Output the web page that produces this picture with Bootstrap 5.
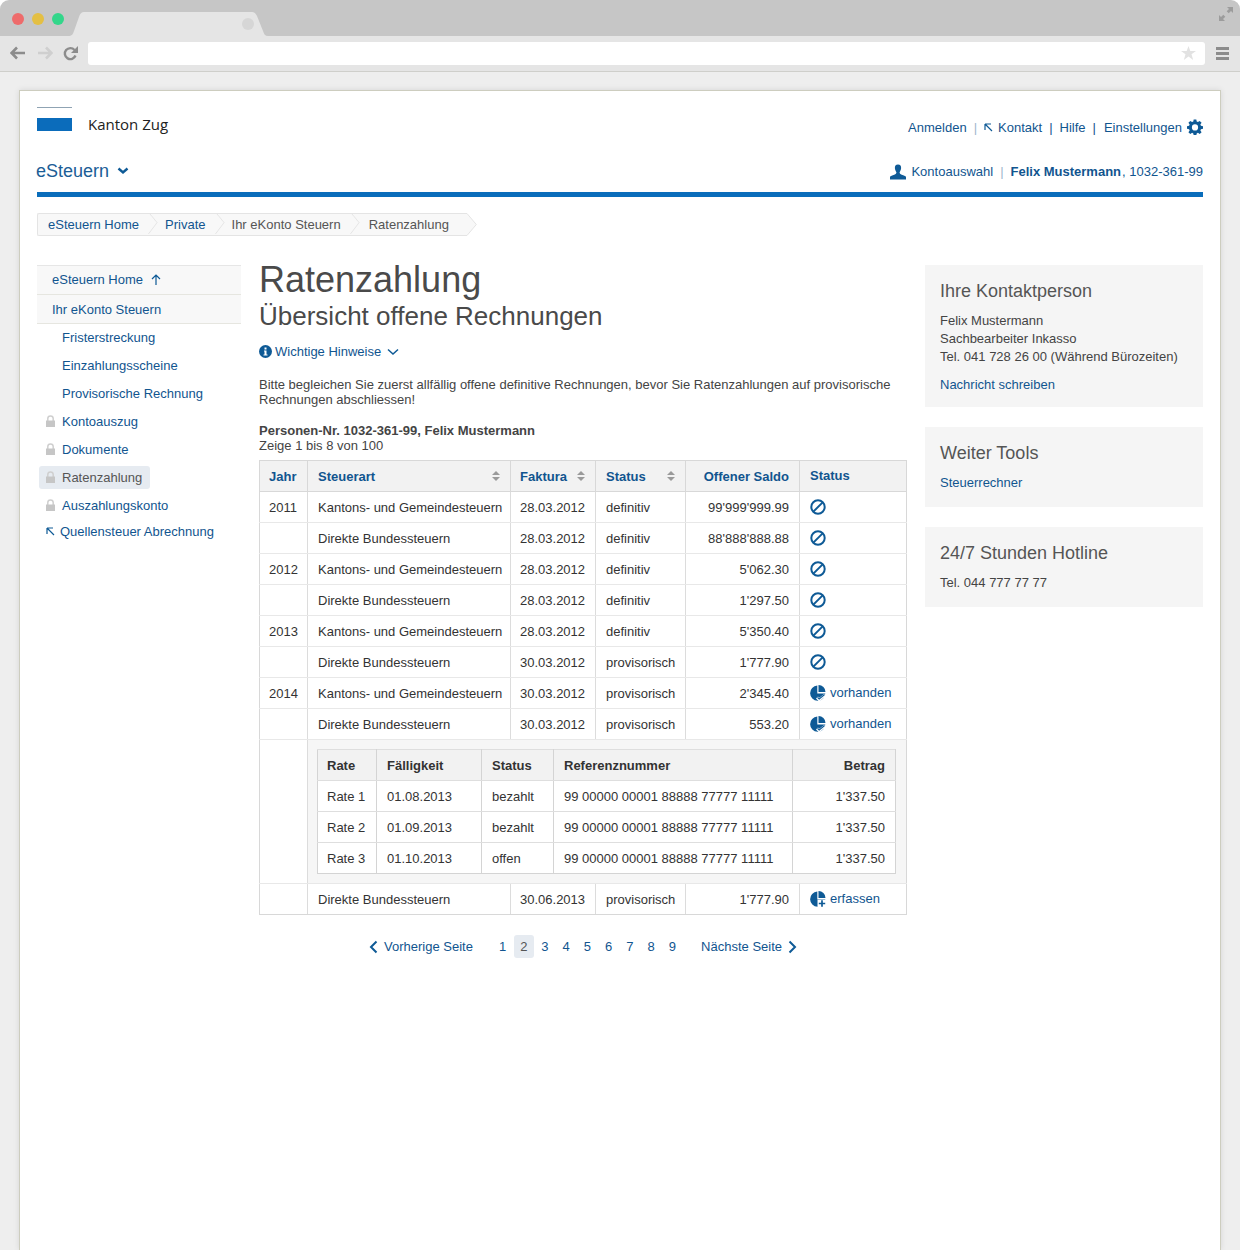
<!DOCTYPE html>
<html lang="de">
<head>
<meta charset="utf-8">
<title>Ratenzahlung</title>
<link href="https://cdn.jsdelivr.net/npm/bootstrap@5.3.0/dist/css/bootstrap.min.css" rel="stylesheet">
<style>
html,body{height:1250px;overflow:hidden;background:#fff}
body{font-family:"Liberation Sans",Arial,sans-serif;font-size:13px;line-height:15px;color:#444;display:flex;flex-direction:column}
a{color:#11558f;text-decoration:none}
svg{display:block;flex:none}
.win-top{height:36px;background:#c6c6c6;border-radius:9px 9px 0 0;display:flex;align-items:flex-start;flex:none}
.win-dots{margin-top:12px;margin-left:12px}
.win-tab{margin-left:4px;margin-top:12px}
.win-exp{margin-top:7px;margin-right:7px}
.win-bar{height:36px;background:#e5e5e5;border-bottom:1px solid #cfcfcb;display:flex;align-items:center;flex:none;padding:0 11px 1px 10px}
.tb-fwd{margin-left:13px}
.tb-rel{margin-left:10px}
.url-box{height:23px;background:#fff;border-radius:3px;flex:1;margin:0 11px 0 10px;display:flex;align-items:center;justify-content:flex-end;padding-right:9px}
.desk{flex:1;background:#eee;padding:18px 19px 0;min-height:0}
.sheet{background:#fff;border:1px solid #cdcdbf;border-bottom:0;height:100%;padding:0 17px;box-shadow:0 0 6px rgba(0,0,0,.1)}
.head-one{height:65px;align-items:flex-start}
.logo-wrap{margin-top:16px;width:35px}
.logo-line{height:1px;background:#8fa3b3}
.logo-flag{height:13px;background:#0b6cbb;margin-top:10px}
.logo-name{font-family:"Open Sans",sans-serif;font-size:15px;line-height:20px;color:#222;margin-left:16px;margin-top:23px}
.top-links{margin-top:28px;color:#11558f}
.sep-l{color:#9fb6cc;margin:0 7px}
.sep-d{color:#11558f;margin:0 7px}
.sep-d.wide{margin-right:8px}
.gap-five{margin-right:5px}
.gear-ico{margin-left:5px}
.head-two{height:36px;align-items:center;padding-bottom:5px}
.prod-name{font-size:18px;line-height:22px;color:#1b5d96;margin-left:-1px;margin-top:-2px}
.prod-chev{margin-left:8px;margin-top:-2px}
.usr-ico{margin-right:5px}
.acct-name{margin-right:1px}
.blue-rule{height:5px;background:#0a6dbb}
.crumbs{margin-top:16px;height:23px;align-items:stretch;width:fit-content}
.crumb-in{background:#f8f8f8;border:1px solid #e4e4e4;border-right:0;border-radius:2px 0 0 2px;display:flex;align-items:center;height:23px}
.crumb-tx{padding-left:7px;padding-right:7px;line-height:21px}
span.crumb-tx{color:#555}
.crumb-tx.first{padding-left:10px}
.crumb-tx.last{padding-left:9px;padding-right:18px}
.crumb-sv{margin-left:2px}
.three-col{margin-top:29px;gap:18px}
.side-col{width:204px;flex:none}
.main-col{width:648px;flex:none}
.aside-col{width:278px;flex:none}
.s-top{background:#f8f8f8;border-bottom:1px solid #e6e6e0;height:29px;padding-left:15px;display:flex;align-items:center}
.s-top.one{border-top:1px solid #e6e6e6;height:30px;gap:8px;padding-bottom:2px}
.s-row{height:28px;display:flex;align-items:center;padding-left:25px;padding-bottom:2px}
.s-row.locked{padding-left:9px}
.s-row.pill-row{padding-left:0}
.s-lock{margin-right:7px}
.s-pill{background:#e6ebf1;border-radius:3px;height:23px;width:111px;display:flex;align-items:center;padding-left:7px;margin-left:2px;color:#555}
.s-ext{height:24px;display:flex;align-items:center;padding-left:9px;gap:5px;padding-bottom:2px}
.pg-title{font-size:36px;line-height:30px;font-weight:400;color:#4a4a4a;margin:0}
.pg-sub{font-size:26px;line-height:30px;font-weight:400;color:#4a4a4a;margin:6px 0 0}
.hint-row{margin-top:13px;gap:3px;align-items:center;height:15px}
.hint-chev{margin-left:3px}
.intro{margin:18px 0 0;color:#444}
.who{margin:16px 0 0;color:#444}
.who b{color:#444}
.tax-tbl.table{table-layout:fixed;width:647px;margin:7px 0 0;border-collapse:collapse;color:#333;--bs-table-color:#333;--bs-table-bg:transparent}
.tax-tbl.table>:not(caption)>*>*{padding:0 10px;height:31px;border:1px solid #dcdcdc;border-top-color:#e8e8e8;border-bottom-color:#e8e8e8;vertical-align:middle;line-height:15px;box-shadow:none;background:transparent;color:#333;white-space:nowrap}
.tax-tbl.table>thead>tr>th{background:#f2f2f2;border-color:#d8d8d8;font-weight:700;color:#11558f}
.tax-tbl.table>tbody>tr:last-child>td{border-bottom-color:#d8d8d8}
.tax-tbl.table>tbody>tr>td:first-child{border-left-color:#d8d8d8}
.tax-tbl.table>tbody>tr>td:last-child{border-right-color:#d8d8d8}
.tax-tbl.table>:not(caption)>*>*.tr-r{text-align:right}
.tax-tbl.table>tbody>tr>td.sub-host{background:#f6f6f6;padding:9px 10px 9px 9px}
.tax-tbl.table>thead>tr>th.st-h{padding-bottom:2px}
.tax-tbl.table>:not(caption)>*>*:nth-child(3),.tax-tbl.table>:not(caption)>*>*:first-child{padding-left:9px}
.tax-tbl.table>tbody>tr>td.sub-host:nth-child(2){padding-left:9px}
.th-flex{display:flex;justify-content:space-between;align-items:center}
.st-cell{display:flex;align-items:center;gap:4px}
.st-cell.lift{margin-top:-1px}
.rate-tbl.table{table-layout:fixed;width:578px;margin:0;border-collapse:collapse;background:#fff;color:#333}
.rate-tbl.table>:not(caption)>*>*{padding:0 10px;height:31px;border:1px solid #d4d4d4;border-top-color:#dedede;border-bottom-color:#dedede;vertical-align:middle;line-height:15px;box-shadow:none;background:#fff;color:#333;white-space:nowrap}
.rate-tbl.table>thead>tr>th{background:#f2f2f2;font-weight:700;color:#333}
.rate-tbl.table>tbody>tr:last-child>td{border-bottom-color:#d4d4d4}
.rate-tbl.table>:not(caption)>*>*.tr-r{text-align:right}
.rate-tbl.table>:not(caption)>*>*:first-child{padding-left:9px}
.pager{margin-top:20px;height:23px;align-items:center;padding-left:110px}
.pg-prev{display:flex;align-items:center;gap:6px;margin-right:19px}
.pg-num{width:21.25px;text-align:center;line-height:23px;display:block}
.pg-num.on{background:#e6ebf1;border-radius:3px;color:#555;width:20px;margin:0 .6px}
.pg-next{display:flex;align-items:center;gap:6px;margin-left:18px}
.info-box{background:#f5f5f5;padding:16px 15px 0;margin-bottom:20px;color:#444}
.info-box h3{font-size:18px;line-height:20px;font-weight:400;color:#555;margin:0}
.bx-a{height:142px}.bx-b{height:80px}.bx-c{height:80px}
.bx-lines{margin:11px 0 0;line-height:18px}
.bx-link{display:block;margin-top:11px;line-height:15px}
.bx-b .bx-link{margin-top:12px}
.bx-c .bx-t{margin-top:12px;line-height:15px}
</style>
</head>
<body>
<svg width="0" height="0" class="position-absolute">
  <defs>
    <symbol id="i-ban" viewBox="0 0 16 16"><circle cx="8" cy="8" r="6.7" fill="none" stroke="#0e5a96" stroke-width="2"/><path d="M3.6 12.4 12.4 3.6" stroke="#0e5a96" stroke-width="2"/></symbol>
    <symbol id="i-pie" viewBox="0 0 16 16"><path d="M7.300 .6a7.600 7.600 0 1 0 8 8H7.300z" fill="#0e5a96"/><path d="M8.500 0a7 7 0 0 1 7 7H8.500z" fill="#0e5a96"/><path d="M7 12.500 9.200 14.700 15 10" fill="none" stroke="#fff" stroke-width="2.800"/><path d="M7.500 12.300 9.200 14 14.400 9.800" fill="none" stroke="#0e5a96" stroke-width="1.100"/></symbol>
    <symbol id="i-add" viewBox="0 0 16 16"><path d="M7.300 .6a7.600 7.600 0 1 0 8 8H7.300z" fill="#0e5a96"/><path d="M8.500 0a7 7 0 0 1 7 7H8.500z" fill="#0e5a96"/><path d="M7.500 8.800H16V16H7.500z" fill="#fff"/><path d="M12 9.300v6.400M8.800 12.500h6.400" stroke="#0e5a96" stroke-width="1.700"/></symbol>
    <symbol id="i-sort" viewBox="0 0 8 10"><path d="M4 0 8 4H0zM4 10 0 6h8z" fill="#9a9a9a"/></symbol>
    <symbol id="i-lock" viewBox="0 0 9 12"><path d="M1.800 6V3.600a2.700 2.700 0 0 1 5.400 0V6" fill="none" stroke="#cfcfcf" stroke-width="1.500"/><path d="M0 5.500h9V12H0z" fill="#c6c6c6"/></symbol>
    <symbol id="i-nw" viewBox="0 0 9 9"><path d="M1 1V7M1 1H7M1 1 8 8" fill="none" stroke="#0e5a96" stroke-width="1.200"/></symbol>
    <symbol id="i-cr" viewBox="0 0 10 23"><path d="M0 -1 9.500 10.500 0 23" fill="none" stroke="#e4e4e4"/></symbol>
    <symbol id="i-left" viewBox="0 0 9 14"><path d="M7.500 1.500 2 7l5.500 5.500" fill="none" stroke="#0e5a96" stroke-width="2"/></symbol>
    <symbol id="i-right" viewBox="0 0 9 14"><path d="M1.500 1.500 7 7l-5.500 5.500" fill="none" stroke="#0e5a96" stroke-width="2"/></symbol>
  </defs>
</svg>

<div class="win-top">
  <svg class="win-dots" width="52" height="14" viewBox="0 0 52 14"><circle cx="6" cy="7" r="6" fill="#ee6b6b"/><circle cx="26" cy="7" r="6" fill="#e4bf43"/><circle cx="46" cy="7" r="6" fill="#33d68a"/></svg>
  <svg class="win-tab" width="200" height="24" viewBox="0 0 200 24"><path d="M0 24C4 24 5 22 6 19L11 5C12 2 13 0 17 0H184C187 0 188 2 189 4L195 19C196 22 197 24 200 24z" fill="#e5e5e5"/><circle cx="180" cy="12" r="6" fill="#d6d6d6"/></svg>
  <div class="flex-grow-1"></div>
  <svg class="win-exp" width="14" height="14" viewBox="0 0 14 14"><path d="M8 0h6v6l-2-2-2.300 2.300-2-2L10 2zM0 8l2 2 2.300-2.300 2 2L4 12l2 2H0z" fill="#9c9c9c"/></svg>
</div>
<div class="win-bar">
  <svg width="15" height="14" viewBox="0 0 15 14"><path d="M7 1.500 1.500 7 7 12.500M2 7h13" fill="none" stroke="#8c8c8c" stroke-width="2.600"/></svg>
  <svg class="tb-fwd" width="15" height="14" viewBox="0 0 15 14"><path d="M8 1.500 13.500 7 8 12.500M13 7H0" fill="none" stroke="#cfcfcf" stroke-width="2.600"/></svg>
  <svg class="tb-rel" width="15" height="15" viewBox="0 0 15 15"><path d="M12.500 9.500A5.500 5.500 0 1 1 11.500 4" fill="none" stroke="#8c8c8c" stroke-width="2.400"/><path d="M15 0v7H8z" fill="#8c8c8c"/></svg>
  <div class="url-box"><svg width="15" height="14" viewBox="0 0 15 14"><path d="M7.500 0 9.300 5H15l-4.500 3.200L12.200 14 7.500 10.500 2.800 14l1.700-5.800L0 5h5.700z" fill="#e2e2e2"/></svg></div>
  <svg width="13" height="13" viewBox="0 0 13 13"><path d="M0 0h13v3H0zM0 5h13v3H0zM0 10h13v3H0z" fill="#8c8c8c"/></svg>
</div>

<div class="desk">
  <div class="sheet">
    <div class="d-flex head-one">
      <div class="logo-wrap"><div class="logo-line"></div><div class="logo-flag"></div></div>
      <div class="logo-name">Kanton Zug</div>
      <div class="top-links ms-auto d-flex align-items-center">
        <a href="#">Anmelden</a><span class="sep-l">|</span>
        <svg class="gap-five" width="9" height="9"><use href="#i-nw"/></svg><a href="#">Kontakt</a><span class="sep-d">|</span>
        <a href="#">Hilfe</a><span class="sep-d wide">|</span>
        <a href="#">Einstellungen</a>
        <svg class="gear-ico" width="16" height="16" viewBox="-.5 -.5 17 17"><path fill="#0e5a96" fill-rule="evenodd" d="M6.600 0h2.800l.4 2.200 1.300.6 1.900-1.300 2 2-1.300 1.900.6 1.300 2.200.4v2.800l-2.200.4-.6 1.300 1.300 1.900-2 2-1.900-1.300-1.300.6-.4 2.200H6.600l-.4-2.200-1.300-.6L3 15.500l-2-2 1.300-1.900-.6-1.300L-.5 9.900V7.100l2.200-.4.6-1.300L1 3.500l2-2 1.900 1.300 1.300-.6zM8 5.200a3.300 3.300 0 1 0 0 6.600 3.300 3.300 0 0 0 0-6.600z"/></svg>
      </div>
    </div>
    <div class="d-flex head-two">
      <a class="prod-name" href="#">eSteuern</a>
      <svg class="prod-chev" width="12" height="8" viewBox="0 0 12 8"><path d="M1.500 1.500 6 5.500l4.500-4" fill="none" stroke="#0e5a96" stroke-width="2.400"/></svg>
      <div class="ms-auto d-flex align-items-center">
        <svg class="usr-ico" width="16" height="16" viewBox="0 0 17 16"><path fill="#0e5a96" d="M8.500 0C11 0 12 1.700 11.800 4c-.2 2-1 3.300-1.600 4.200 0 1.300.6 2 2.300 2.700 2 .8 4 1.300 4.500 2.100V16H0v-3c.5-.8 2.500-1.300 4.500-2.100 1.700-.7 2.300-1.400 2.300-2.700C6.200 7.300 5.400 6 5.200 4 5 1.700 6 0 8.500 0z"/></svg>
        <a href="#">Kontoauswahl</a><span class="sep-l">|</span><a href="#"><b class="acct-name">Felix Mustermann</b>, 1032-361-99</a>
      </div>
    </div>
    <div class="blue-rule"></div>

    <div class="d-flex crumbs">
      <div class="crumb-in">
        <a class="crumb-tx first" href="#">eSteuern Home</a><svg class="crumb-sv" width="10" height="21" viewBox="0 1 10 21"><use href="#i-cr"/></svg>
        <a class="crumb-tx" href="#">Private</a><svg class="crumb-sv" width="10" height="21" viewBox="0 1 10 21"><use href="#i-cr"/></svg>
        <span class="crumb-tx">Ihr eKonto Steuern</span><svg class="crumb-sv" width="10" height="21" viewBox="0 1 10 21"><use href="#i-cr"/></svg>
        <span class="crumb-tx last">Ratenzahlung</span>
      </div>
      <svg width="10" height="23" viewBox="0 0 10 23"><path d="M-1 .5H0L9.300 11.500 0 22.500H-1z" fill="#f8f8f8" stroke="#e4e4e4"/></svg>
    </div>

    <div class="d-flex three-col">
      <nav class="side-col">
        <div class="s-top one"><a href="#">eSteuern Home</a><svg width="10" height="11" viewBox="0 0 10 11"><path d="M5 11V1M1 5l4-4 4 4" fill="none" stroke="#0e5a96" stroke-width="1.200"/></svg></div>
        <div class="s-top"><a href="#">Ihr eKonto Steuern</a></div>
        <div class="s-row"><a href="#">Fristerstreckung</a></div>
        <div class="s-row"><a href="#">Einzahlungsscheine</a></div>
        <div class="s-row"><a href="#">Provisorische Rechnung</a></div>
        <div class="s-row locked"><svg class="s-lock" width="9" height="12"><use href="#i-lock"/></svg><a href="#">Kontoauszug</a></div>
        <div class="s-row locked"><svg class="s-lock" width="9" height="12"><use href="#i-lock"/></svg><a href="#">Dokumente</a></div>
        <div class="s-row pill-row"><div class="s-pill"><svg class="s-lock" width="9" height="12"><use href="#i-lock"/></svg>Ratenzahlung</div></div>
        <div class="s-row locked"><svg class="s-lock" width="9" height="12"><use href="#i-lock"/></svg><a href="#">Auszahlungskonto</a></div>
        <div class="s-ext"><svg width="9" height="9"><use href="#i-nw"/></svg><a href="#">Quellensteuer Abrechnung</a></div>
      </nav>

      <main class="main-col">
        <h1 class="pg-title">Ratenzahlung</h1>
        <h2 class="pg-sub">Übersicht offene Rechnungen</h2>
        <div class="d-flex hint-row">
          <svg width="13" height="13" viewBox="0 0 13 13"><circle cx="6.500" cy="6.500" r="6.500" fill="#0e5a96"/><path d="M5.500 2.500h2v2h-2zM5 5.500h2.500v4h1v1h-4v-1h1v-3H5z" fill="#fff"/></svg>
          <a href="#">Wichtige Hinweise</a>
          <svg class="hint-chev" width="12" height="8" viewBox="0 0 12 8"><path d="M1 1.500 6 6l5-4.500" fill="none" stroke="#0e5a96" stroke-width="1.500"/></svg>
        </div>
        <p class="intro">Bitte begleichen Sie zuerst allfällig offene definitive Rechnungen, bevor Sie Ratenzahlungen auf provisorische Rechnungen abschliessen!</p>
        <div class="who"><b>Personen-Nr. 1032-361-99, Felix Mustermann</b><br>Zeige 1 bis 8 von 100</div>

        <table class="table tax-tbl">
          <colgroup><col width="48"><col width="203"><col width="85"><col width="90"><col width="114"><col width="107"></colgroup>
          <thead><tr>
            <th>Jahr</th>
            <th><div class="th-flex">Steuerart<svg width="8" height="10"><use href="#i-sort"/></svg></div></th>
            <th><div class="th-flex">Faktura<svg width="8" height="10"><use href="#i-sort"/></svg></div></th>
            <th><div class="th-flex">Status<svg width="8" height="10"><use href="#i-sort"/></svg></div></th>
            <th class="tr-r">Offener Saldo</th>
            <th class="st-h">Status</th>
          </tr></thead>
          <tbody>
            <tr><td>2011</td><td>Kantons- und Gemeindesteuern</td><td>28.03.2012</td><td>definitiv</td><td class="tr-r">99'999'999.99</td><td><svg width="16" height="16"><use href="#i-ban"/></svg></td></tr>
            <tr><td></td><td>Direkte Bundessteuern</td><td>28.03.2012</td><td>definitiv</td><td class="tr-r">88'888'888.88</td><td><svg width="16" height="16"><use href="#i-ban"/></svg></td></tr>
            <tr><td>2012</td><td>Kantons- und Gemeindesteuern</td><td>28.03.2012</td><td>definitiv</td><td class="tr-r">5'062.30</td><td><svg width="16" height="16"><use href="#i-ban"/></svg></td></tr>
            <tr><td></td><td>Direkte Bundessteuern</td><td>28.03.2012</td><td>definitiv</td><td class="tr-r">1'297.50</td><td><svg width="16" height="16"><use href="#i-ban"/></svg></td></tr>
            <tr><td>2013</td><td>Kantons- und Gemeindesteuern</td><td>28.03.2012</td><td>definitiv</td><td class="tr-r">5'350.40</td><td><svg width="16" height="16"><use href="#i-ban"/></svg></td></tr>
            <tr><td></td><td>Direkte Bundessteuern</td><td>30.03.2012</td><td>provisorisch</td><td class="tr-r">1'777.90</td><td><svg width="16" height="16"><use href="#i-ban"/></svg></td></tr>
            <tr><td>2014</td><td>Kantons- und Gemeindesteuern</td><td>30.03.2012</td><td>provisorisch</td><td class="tr-r">2'345.40</td><td><div class="st-cell lift"><svg width="16" height="16"><use href="#i-pie"/></svg><a href="#">vorhanden</a></div></td></tr>
            <tr><td></td><td>Direkte Bundessteuern</td><td>30.03.2012</td><td>provisorisch</td><td class="tr-r">553.20</td><td><div class="st-cell lift"><svg width="16" height="16"><use href="#i-pie"/></svg><a href="#">vorhanden</a></div></td></tr>
            <tr><td></td><td colspan="5" class="sub-host">
              <table class="table rate-tbl">
                <colgroup><col width="59"><col width="105"><col width="72"><col width="239"><col width="103"></colgroup>
                <thead><tr><th>Rate</th><th>Fälligkeit</th><th>Status</th><th>Referenznummer</th><th class="tr-r">Betrag</th></tr></thead>
                <tbody>
                  <tr><td>Rate 1</td><td>01.08.2013</td><td>bezahlt</td><td>99 00000 00001 88888 77777 11111</td><td class="tr-r">1'337.50</td></tr>
                  <tr><td>Rate 2</td><td>01.09.2013</td><td>bezahlt</td><td>99 00000 00001 88888 77777 11111</td><td class="tr-r">1'337.50</td></tr>
                  <tr><td>Rate 3</td><td>01.10.2013</td><td>offen</td><td>99 00000 00001 88888 77777 11111</td><td class="tr-r">1'337.50</td></tr>
                </tbody>
              </table>
            </td></tr>
            <tr><td></td><td>Direkte Bundessteuern</td><td>30.06.2013</td><td>provisorisch</td><td class="tr-r">1'777.90</td><td><div class="st-cell lift"><svg width="16" height="16"><use href="#i-add"/></svg><a href="#">erfassen</a></div></td></tr>
          </tbody>
        </table>

        <div class="d-flex pager">
          <a class="pg-prev" href="#"><svg width="9" height="14"><use href="#i-left"/></svg>Vorherige Seite</a>
          <a class="pg-num" href="#">1</a><span class="pg-num on">2</span><a class="pg-num" href="#">3</a><a class="pg-num" href="#">4</a><a class="pg-num" href="#">5</a><a class="pg-num" href="#">6</a><a class="pg-num" href="#">7</a><a class="pg-num" href="#">8</a><a class="pg-num" href="#">9</a>
          <a class="pg-next" href="#">Nächste Seite<svg width="9" height="14"><use href="#i-right"/></svg></a>
        </div>
      </main>

      <aside class="aside-col">
        <div class="info-box bx-a">
          <h3>Ihre Kontaktperson</h3>
          <p class="bx-lines">Felix Mustermann<br>Sachbearbeiter Inkasso<br>Tel. 041 728 26 00 (Während Bürozeiten)</p>
          <a class="bx-link" href="#">Nachricht schreiben</a>
        </div>
        <div class="info-box bx-b">
          <h3>Weiter Tools</h3>
          <a class="bx-link" href="#">Steuerrechner</a>
        </div>
        <div class="info-box bx-c">
          <h3>24/7 Stunden Hotline</h3>
          <div class="bx-t">Tel. 044 777 77 77</div>
        </div>
      </aside>
    </div>
  </div>
</div>
<script src="https://cdn.jsdelivr.net/npm/bootstrap@5.3.0/dist/js/bootstrap.bundle.min.js"></script>
</body>
</html>
